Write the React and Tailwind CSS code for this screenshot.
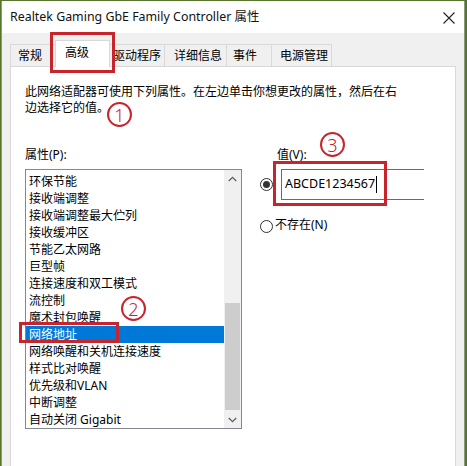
import React from "react";

const items = [
  "环保节能",
  "接收端调整",
  "接收端调整最大伫列",
  "接收缓冲区",
  "节能乙太网路",
  "巨型帧",
  "连接速度和双工模式",
  "流控制",
  "魔术封包唤醒",
  "网络地址",
  "网络唤醒和关机连接速度",
  "样式比对唤醒",
  "优先级和VLAN",
  "中断调整",
  "自动关闭 Gigabit",
];

function Circle({ n, cls }) {
  return (
    <div
      className={`absolute w-[25px] h-[25px] rounded-full border-2 border-[#c8242c] flex items-center justify-center text-[#c8242c] text-[18px] leading-none font-light ${cls}`}
    >
      {n}
    </div>
  );
}

export default function App() {
  const font = "font-['Noto_Sans','Noto_Sans_CJK_SC',sans-serif]";
  return (
    <div className={`relative w-[467px] h-[466px] overflow-hidden bg-[#56762e] pl-[1px] pr-[2px] pt-[1px] ${font} text-[12px] text-black`}>
      <div className="h-[480px] flex flex-col border-l border-r border-[#8a9a7a] bg-[#f0f0f0]">
        {/* title bar */}
        <div className="h-[32px] bg-white flex items-center justify-between pl-[8px] pr-[9px] shrink-0">
          <span className="text-[12.4px] leading-none text-[#111]">Realtek Gaming GbE Family Controller 属性</span>
          <svg width="12" height="12" viewBox="0 0 12 12" className="mt-[1px]">
            <path d="M0.5 0.5 L11.5 11.5 M11.5 0.5 L0.5 11.5" stroke="#222" strokeWidth="1.1" fill="none" />
          </svg>
        </div>
        {/* body */}
        <div className="flex-1 flex flex-col px-[8px]">
          <div className="h-[34px] flex items-end">
            <div className="w-[45px] h-[22px] mb-px border-t border-l border-[#d9d9d9] pl-[7px] flex items-center leading-none">常规</div>
            <div className="relative z-10 w-[55px] h-[27px] bg-white border-t border-l border-r border-[#d9d9d9] pl-[9px] pt-[6px] leading-none">高级</div>
            <div className="w-[55px] h-[22px] mb-px border-t border-r border-[#d9d9d9] pl-[3px] flex items-center leading-none">驱动程序</div>
            <div className="w-[62px] h-[22px] mb-px border-t border-r border-[#d9d9d9] pl-[9px] flex items-center leading-none">详细信息</div>
            <div className="w-[45px] h-[22px] mb-px border-t border-r border-[#d9d9d9] pl-[6px] flex items-center leading-none">事件</div>
            <div className="w-[60px] h-[22px] mb-px border-t border-r border-[#d9d9d9] pl-[8px] flex items-center leading-none">电源管理</div>
          </div>
          <div className="-mt-px flex-1 bg-white border border-[#d9d9d9] pl-[14px] pt-[17px]">
            <p className="leading-[16px] w-[380px]">
              此网络适配器可使用下列属性。在左边单击你想更改的属性，然后在右
              <br />
              边选择它的值。
            </p>
            <div className="flex mt-[31px]">
              <div className="flex flex-col">
                <div className="leading-[16px] h-[16px]">属性(P):</div>
                <div className="mt-[6px] w-[217px] h-[260px] border border-[#828790] flex">
                  <div className="flex-1 pt-[3px] flex flex-col">
                    {items.map((t, i) => (
                      <div
                        key={t}
                        className={`h-[17px] leading-[17px] pl-[3px] whitespace-nowrap ${i === 9 ? "bg-[#0078d7] text-white" : ""}`}
                      >
                        {t}
                      </div>
                    ))}
                  </div>
                  <div className="w-[17px] bg-[#f0f0f0] flex flex-col">
                    <div className="h-[17px] flex items-center justify-center">
                      <svg width="9" height="6" viewBox="0 0 9 6">
                        <path d="M0.8 5 L4.5 1.3 L8.2 5" stroke="#606060" strokeWidth="1.3" fill="none" />
                      </svg>
                    </div>
                    <div className="h-[116px]" />
                    <div className="h-[107px] mx-[1px] bg-[#cdcdcd]" />
                    <div className="flex-1" />
                    <div className="h-[17px] flex items-center justify-center">
                      <svg width="9" height="6" viewBox="0 0 9 6">
                        <path d="M0.8 1 L4.5 4.7 L8.2 1" stroke="#606060" strokeWidth="1.3" fill="none" />
                      </svg>
                    </div>
                  </div>
                </div>
              </div>
              <div className="ml-[18px] flex flex-col">
                <div className="pl-[17px] leading-[16px] h-[16px]">值(V):</div>
                <div className="mt-[6px] flex items-center">
                  <div className="w-[13px] h-[13px] rounded-full border border-[#333] flex items-center justify-center">
                    <div className="w-[7px] h-[7px] rounded-full bg-[#333]" />
                  </div>
                  <div className="ml-[8px] w-[143px] h-[31px] border-l border-t border-b border-[#2f79b5] flex items-center pl-[3px]">
                    <span className="text-[12.5px] leading-none">ABCDE1234567</span>
                    <span className="ml-[1px] w-px h-[17px] bg-black" />
                  </div>
                </div>
                <div className="mt-[17px] flex items-center">
                  <div className="w-[13px] h-[13px] rounded-full border border-[#333] mt-[3px]" />
                  <span className="ml-[2px] leading-[16px]">不存在(N)</span>
                </div>
              </div>
            </div>
          </div>
        </div>
      </div>

      {/* annotations */}
      <div className="absolute left-[50px] top-[32px] w-[65px] h-[41px] border-[3px] border-[#c8242c]" />
      <div className="absolute left-[19px] top-[322px] w-[100px] h-[21px] border-[3px] border-[#c8242c]" />
      <div className="absolute left-[273px] top-[161px] w-[114px] h-[45px] border-[3px] border-[#c8242c]" />
      <Circle n="1" cls="left-[107px] top-[102px]" />
      <Circle n="2" cls="left-[121px] top-[296px]" />
      <Circle n="3" cls="left-[320px] top-[132px]" />
    </div>
  );
}
